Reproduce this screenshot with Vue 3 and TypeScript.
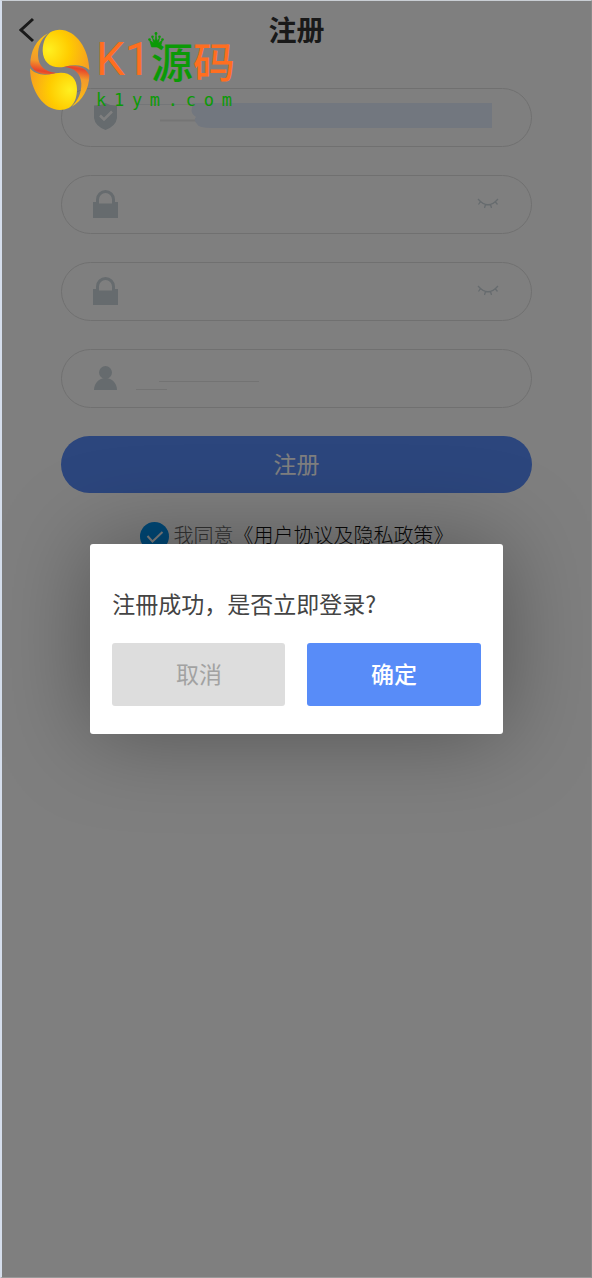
<script setup lang="ts">
import { ref } from 'vue'

type FieldIcon = 'shield' | 'lock' | 'user'

interface Field {
  id: string
  label: string
  icon: FieldIcon
  secret: boolean
  value: string
}

const fields = ref<Field[]>([
  { id: 'account', label: '账号', icon: 'shield', secret: false, value: '' },
  { id: 'password', label: '密码', icon: 'lock', secret: true, value: '' },
  { id: 'confirm', label: '确认密码', icon: 'lock', secret: true, value: '' },
  { id: 'invite', label: '邀请人', icon: 'user', secret: false, value: '' },
])
const agreed = ref(true)
const dialogOpen = ref(true)
const domain = 'k1ym.com'.split('')
</script>

<template>
  <div class="frame">
    <header class="bar">
      <button class="back" type="button" aria-label="返回">
        <svg width="16" height="26" viewBox="0 0 16 26"><path d="M14 2 2 13l12 11" fill="none" stroke="#333" stroke-width="3" /></svg>
      </button>
      <h1 class="title">注册</h1>
    </header>

    <form class="form" @submit.prevent="dialogOpen = true">
      <div v-for="f in fields" :key="f.id" class="field">
        <label class="icon" :for="f.id" :aria-label="f.label">
          <svg v-if="f.icon === 'shield'" width="25" height="28" viewBox="0 0 25 28">
            <path d="M1 2.500Q8 2.500 12.500 0Q17 2.500 24 2.500V15Q23 23 12.500 27Q2 23 1 15Z" fill="#ccd6dc" />
            <path d="M7 12.500 11 16.500 19 8.500" fill="none" stroke="#fff" stroke-width="2.500" />
          </svg>
          <svg v-else-if="f.icon === 'lock'" width="25" height="30" viewBox="0 0 25 30">
            <path d="M0 13H3V10.500A9.500 9.500 0 0 1 22 10.500V13H25V29H0ZM6 14.500H19V10.500A6.500 6.500 0 0 0 6 10.500Z" fill="#ccd6dc" fill-rule="evenodd" />
          </svg>
          <svg v-else width="25" height="26" viewBox="0 0 25 26">
            <circle cx="12.500" cy="7.500" r="6.500" fill="#ccd6dc" />
            <path d="M1 25C1 18 6 13 12.500 13S24 18 24 25Z" fill="#ccd6dc" />
          </svg>
        </label>
        <div class="entry">
          <svg v-if="f.icon === 'shield'" class="marks" width="357" height="30" viewBox="0 0 357 30">
            <path d="M0 2.500H58" stroke="#e8edf0" />
            <path d="M24 18.500H62" stroke="#ebebeb" stroke-width="2" />
            <path d="M56 1H356V26H76Q62 26 61 22Q57 18 60 15Q54 11 56 6Z" fill="#e5eefe" />
          </svg>
          <svg v-if="f.icon === 'user'" class="marks" width="357" height="30" viewBox="0 0 357 30">
            <path d="M23 18.500H123M0 26.500H31" stroke="#e6e6e6" stroke-width="1" />
          </svg>
          <input :id="f.id" v-model="f.value" class="input" :type="f.secret ? 'password' : 'text'" />
        </div>
        <button v-if="f.secret" class="eye" type="button" aria-label="显示密码">
          <svg width="22" height="12" viewBox="0 0 22 12">
            <path d="M1 1Q11 12.500 21 1M3.500 3.500 1.500 6.500M8.500 6.500 7.500 10M13.500 6.500 14.500 10M18 3.500 20.500 6.500" fill="none" stroke="#ccd6dc" stroke-width="1.300" />
          </svg>
        </button>
      </div>
      <button class="submit" type="submit">注册</button>
      <div class="agree">
        <span class="tick">
          <input id="agree" v-model="agreed" type="checkbox" />
          <svg v-if="agreed" width="29" height="29" viewBox="0 0 29 29"><path d="M7.500 14 12.500 19.500 22.500 10" fill="none" stroke="#fff" stroke-width="2" /></svg>
        </span>
        <label for="agree">我同意</label><a href="#policy">《用户协议及隐私政策》</a>
      </div>
    </form>

    <div v-if="dialogOpen" class="overlay">
      <section class="dialog" role="dialog" aria-modal="true" aria-labelledby="message">
        <p id="message" class="message">注冊成功，是否立即登录?</p>
        <div class="actions">
          <button class="cancel" type="button" @click="dialogOpen = false">取消</button>
          <button class="ok" type="button" @click="dialogOpen = false">确定</button>
        </div>
      </section>
    </div>

    <div class="brand">
      <svg class="egg" width="61" height="82" viewBox="27 27 183 246" aria-hidden="true">
        <defs>
          <radialGradient id="top" gradientUnits="userSpaceOnUse" cx="86" cy="90" r="125">
            <stop offset="0" stop-color="#fff020" /><stop offset=".5" stop-color="#ffcc00" /><stop offset="1" stop-color="#f7a020" />
          </radialGradient>
          <radialGradient id="low" gradientUnits="userSpaceOnUse" cx="150" cy="210" r="125">
            <stop offset="0" stop-color="#fff020" /><stop offset=".5" stop-color="#ffcc00" /><stop offset="1" stop-color="#f7a020" />
          </radialGradient>
          <linearGradient id="left" x1=".5" y1="0" x2=".4" y2="1">
            <stop offset="0" stop-color="#ffc40c" /><stop offset=".68" stop-color="#f29a2c" /><stop offset=".92" stop-color="#e8442a" /><stop offset="1" stop-color="#ef6a2a" />
          </linearGradient>
          <linearGradient id="right" x1=".5" y1="1" x2=".6" y2="0">
            <stop offset="0" stop-color="#ffc40c" /><stop offset=".68" stop-color="#f29a2c" /><stop offset=".92" stop-color="#e8442a" /><stop offset="1" stop-color="#ef6a2a" />
          </linearGradient>
        </defs>
        <path d="M118 29C168 29 207 86 208 150C188 133 160 134 134 140C98 148 69 130 68 92C68 64 80 41 97 34Q107 29 118 29Z" fill="url(#top)" />
        <path d="M120 270C72 270 31 214 30 145C47 166 75 167 106 160C145 152 171 171 171 207C171 234 162 255 146 264Q134 270 120 270Z" fill="url(#low)" />
        <path d="M84 40C49 57 30 96 31 134C44 162 80 168 108 158C76 156 55 138 54 107C54 78 64 57 84 40Z" fill="url(#left)" />
        <path d="M155 260C187 244 208 205 208 166C195 137 162 132 132 141C163 143 182 160 184 190C185 219 173 243 155 260Z" fill="url(#right)" />
      </svg>
      <div class="words">
        <div class="name">
          <span class="latin">K1</span>
          <span class="source">源<svg class="crown" width="16" height="16" viewBox="0 0 16 16" aria-hidden="true"><path d="M3.500 15 1.500 8 5.500 11 4.500 6 7 9 8 2 9 9 11.500 6 10.500 11 14.500 8 12.500 15Z" fill="#0b9a06" stroke="#0b9a06" stroke-width=".6" /><g fill="#0b9a06"><circle cx="1.500" cy="7.500" r="1.300" /><circle cx="4.500" cy="4.800" r="1.300" /><circle cx="8" cy="1.500" r="1.400" /><circle cx="11.500" cy="4.800" r="1.300" /><circle cx="14.500" cy="7.500" r="1.300" /></g></svg></span><span class="code">码</span>
        </div>
        <div class="domain"><span v-for="(c, i) in domain" :key="i">{{ c }}</span></div>
      </div>
    </div>
  </div>
</template>

<style>
body {
  margin: 0;
}
</style>

<style scoped>
.frame {
  position: relative;
  box-sizing: border-box;
  min-height: 100vh;
  border-top: 1px solid #c9ced4;
  border-right: 1px solid #8a8a8a;
  border-bottom: 1px solid #9a9a9a;
  border-left: 2px solid #d5deec;
  background: #fff;
  font-family: "Noto Sans CJK SC", sans-serif;
  font-weight: 300;
}
button,
input {
  margin: 0;
  padding: 0;
  border: 0;
  background: none;
  font: inherit;
}
svg {
  display: block;
}
.bar {
  display: grid;
  grid-template-columns: 60px 1fr 60px;
  align-items: center;
  height: 58px;
}
.back {
  justify-self: start;
  padding-left: 17px;
}
.title {
  margin: 0;
  padding-bottom: 2px;
  color: #333;
  font-size: 28px;
  font-weight: 700;
  line-height: 40px;
  text-align: center;
}
.form {
  display: flex;
  flex-direction: column;
  gap: 28px;
  width: 80%;
  margin: 0 auto;
  padding-top: 29px;
}
.field {
  display: flex;
  align-items: center;
  box-sizing: border-box;
  height: 59px;
  padding: 0 32px 2px 31px;
  border: 1px solid #e0e0e0;
  border-radius: 30px;
}
.icon {
  width: 25px;
  margin-right: 18px;
}
.entry {
  position: relative;
  flex: 1;
  min-width: 0;
}
.marks {
  position: absolute;
  top: 0;
  left: 0;
  max-width: 100%;
}
.input {
  position: relative;
  display: block;
  width: 100%;
  height: 30px;
  font-size: 20px;
  outline: 0;
}
.submit {
  height: 57px;
  padding-bottom: 3px;
  border-radius: 30px;
  background: #588cfa;
  color: #fff;
  font-size: 23px;
  font-weight: 400;
}
.agree {
  display: flex;
  align-items: center;
  justify-content: center;
  height: 30px;
  color: #666;
  font-size: 20px;
  line-height: 30px;
}
.agree label,
.agree a {
  padding-bottom: 2px;
}
.agree a {
  color: #111;
  text-decoration: none;
}
.tick {
  position: relative;
  width: 29px;
  height: 29px;
  margin-right: 5px;
}
.tick input {
  display: block;
  width: 29px;
  height: 29px;
  border-radius: 50%;
  background: #fff;
  appearance: none;
}
.tick input:checked {
  background: #0092f0;
}
.tick svg {
  position: absolute;
  inset: 0;
  pointer-events: none;
}
.overlay {
  position: absolute;
  inset: 0;
  display: flex;
  align-items: center;
  justify-content: center;
  background: rgba(0, 0, 0, 0.5);
}
.dialog {
  box-sizing: border-box;
  width: 70%;
  padding: 42px 22px 28px;
  border-radius: 3px;
  background: #fff;
  box-shadow: 0 0 90px rgba(0, 0, 0, 0.35);
}
.message {
  margin: 0 0 23px;
  color: #444;
  font-size: 23px;
  font-weight: 400;
  line-height: 34px;
}
.actions {
  display: grid;
  grid-template-columns: 1fr 1fr;
  gap: 22px;
}
.actions button {
  height: 63px;
  padding-bottom: 3px;
  border-radius: 3px;
  font-size: 23px;
}
.actions .cancel {
  background: #ddd;
  color: #a2a2a2;
  font-weight: 400;
}
.actions .ok {
  background: #588cf8;
  color: #fff;
  font-weight: 500;
}
.brand {
  position: absolute;
  top: 28px;
  left: 27px;
  display: flex;
  gap: 6px;
  pointer-events: none;
}
.words {
  width: 139px;
}
.name {
  display: flex;
  align-items: center;
  height: 61px;
  color: #ff6e20;
  font-size: 42px;
  font-weight: 500;
  line-height: 61px;
}
.latin {
  width: 55px;
  font-family: Roboto, sans-serif;
  font-size: 46px;
  font-weight: 400;
}
.source {
  position: relative;
  color: #0b9a06;
}
.crown {
  position: absolute;
  top: 3px;
  left: -3px;
}
.domain {
  display: flex;
  justify-content: space-between;
  width: 136px;
  color: #0b9a06;
  font-family: "DejaVu Sans Mono", monospace;
  font-size: 17px;
  font-weight: 400;
  line-height: 20px;
}
</style>
